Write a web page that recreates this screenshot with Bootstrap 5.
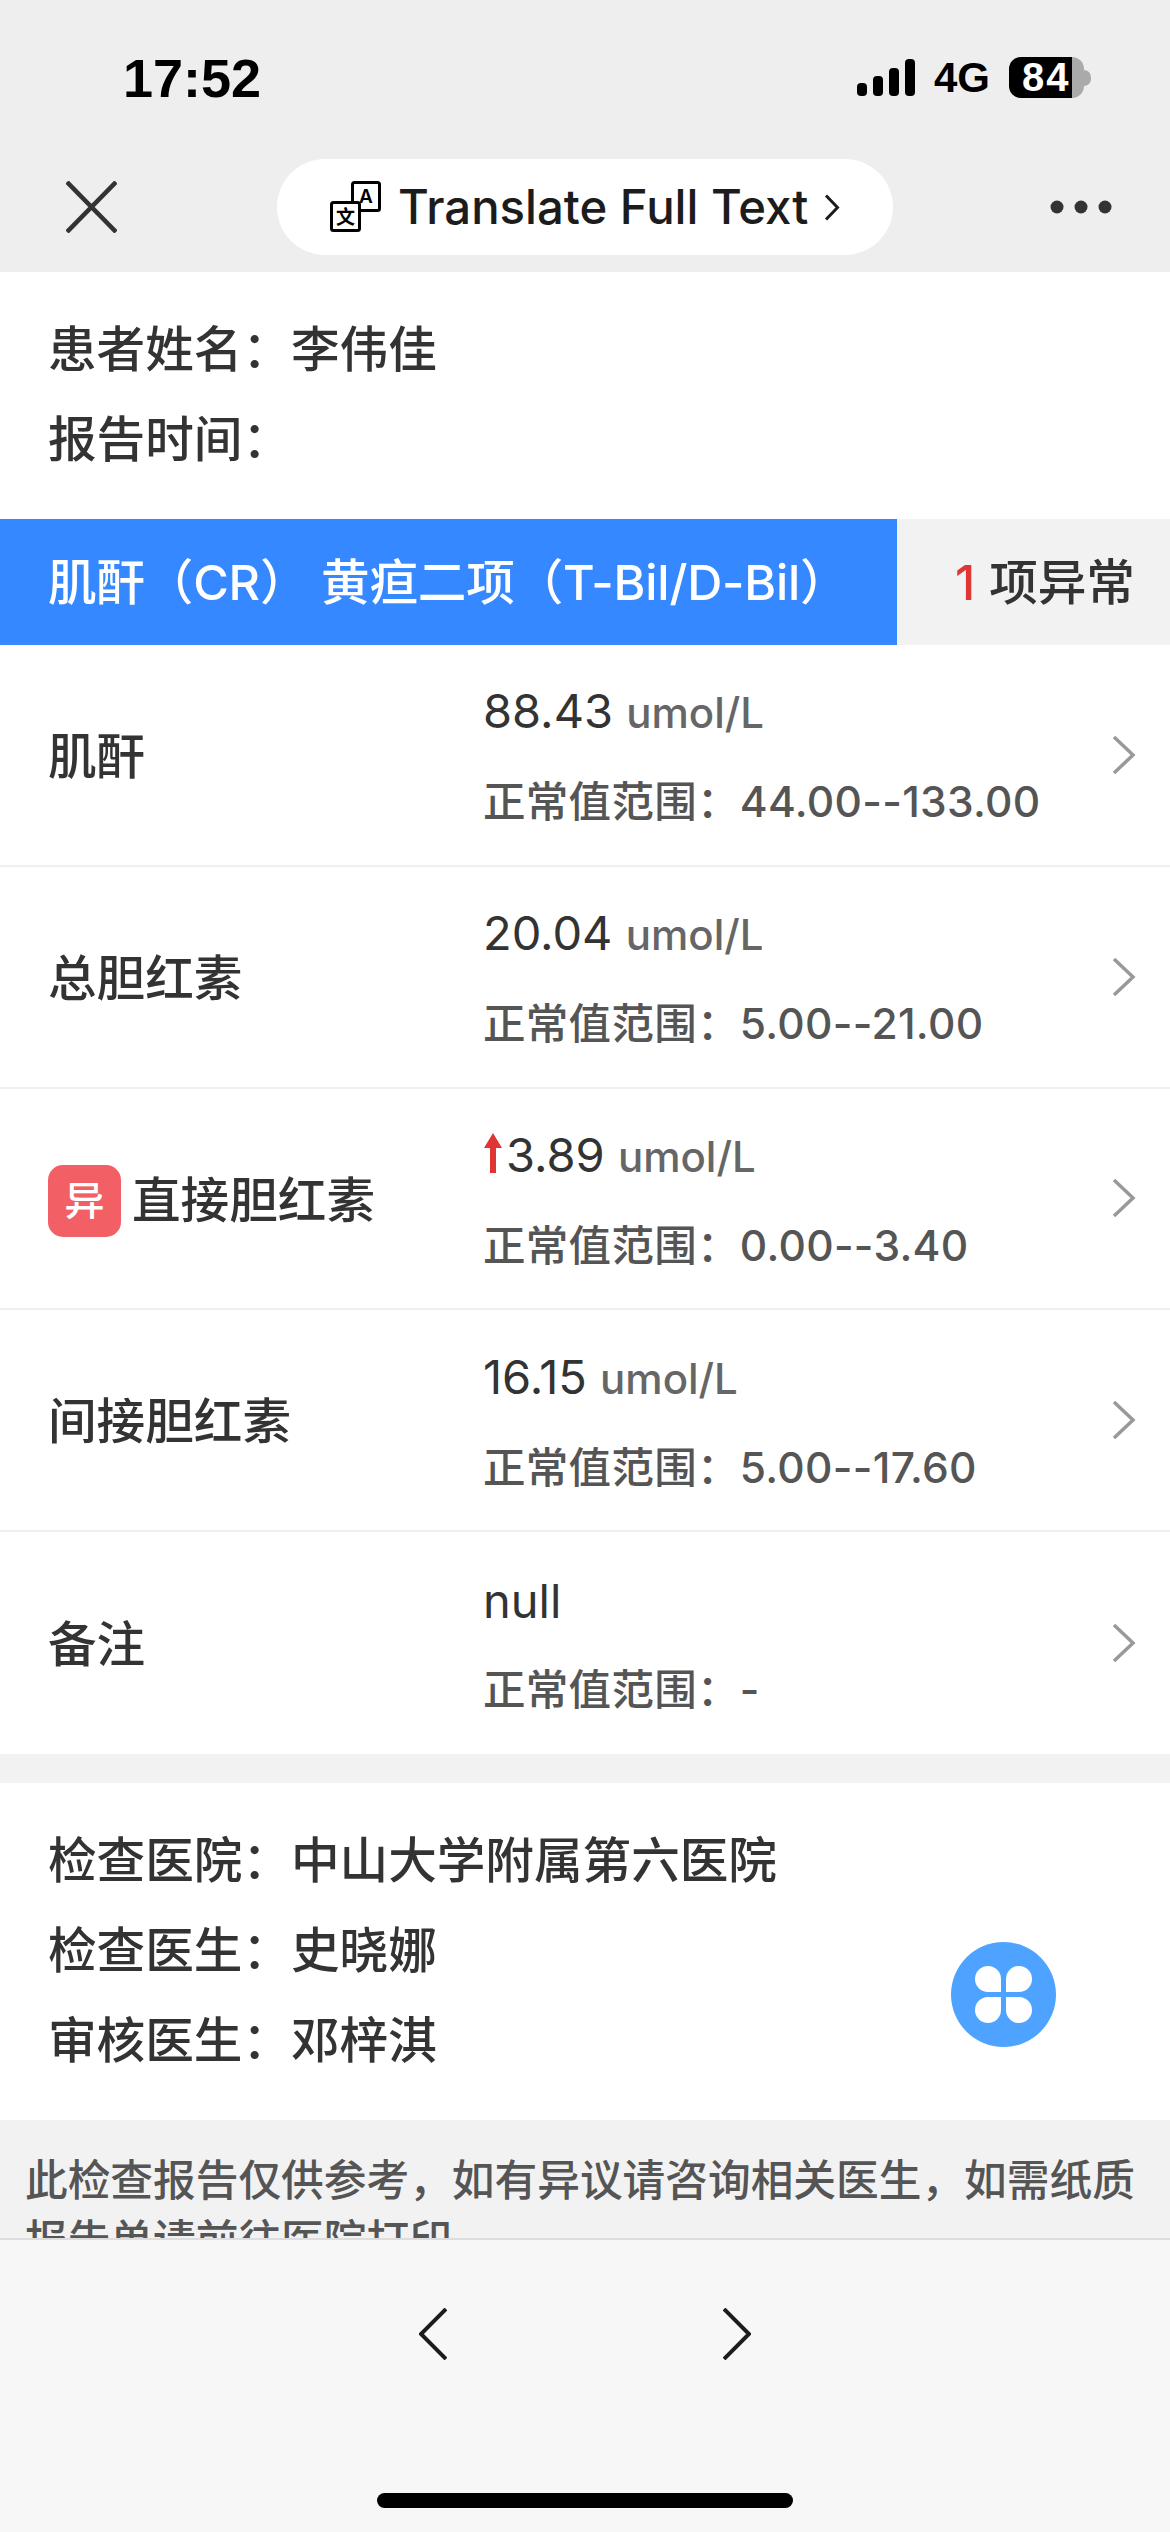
<!DOCTYPE html>
<html lang="zh-CN">
<head>
  <meta charset="UTF-8">
  <meta name="viewport" content="width=device-width, initial-scale=1">
  <title>检查报告</title>

  <link rel="stylesheet" href="https://cdn.jsdelivr.net/npm/bootstrap@5.3.0/dist/css/bootstrap.min.css">

  <style>
    body {
      font-family: Inter, "Noto Sans CJK SC", sans-serif;
      background-color: #fff;
      color: #333;
      width: 1170px;
    }
    .phone { height: 2532px; overflow: hidden; }

    /* top chrome */
    .top-chrome { background: #eee; height: 272px; flex: none; }
    .status-row { height: 159px; padding: 57px 79px 0 123px; }
    .clock { font: 700 54px/42px "Liberation Sans", sans-serif; color: #000; }
    .signal-bars { gap: 6px; height: 37px; }
    .signal-bars i { width: 10px; border-radius: 4px; background: #000; display: block; }
    .net-type { font: 700 42px/40px "Liberation Sans", sans-serif; color: #000; margin: 0 19px; }
    .battery {
      width: 75px; height: 41px; border-radius: 12px;
      background: linear-gradient(90deg, #000 63px, #aaa 63px);
      color: #fff; font: 700 40px/41px "Liberation Sans", sans-serif;
      padding-left: 13px; letter-spacing: 2px; white-space: nowrap;
    }
    .battery-nub { width: 7px; height: 16px; background: #aaa; border-radius: 0 8px 8px 0; }
    .nav-row { padding: 0 58px 0 66px; height: 96px; }
    .translate-pill {
      width: 616px; height: 96px; margin-left: 160px;
      background: #fff; color: #1c1c1c;
      font-size: 47.3px; font-weight: 500; padding-left: 53px;
    }

    /* report */
    .report-main { background: #f2f2f2; min-height: 0; }
    .info-block { background: #fff; padding: 33px 48px 34px; font-size: 48.6px; font-weight: 500; line-height: 90px; color: #333; }
    .tab-active { width: 897px; height: 126px; background: #3588ff; color: #fff; font-size: 48.6px; font-weight: 500; letter-spacing: -.2px; padding: 2px 0 0 48px; white-space: nowrap; }
    .tab-other { height: 126px; font-size: 48.6px; font-weight: 500; background: #f2f2f2; color: #333; padding: 2px 0 0 58px; }
    .tab-other b { color: #df3535; font-weight: 500; margin-right: 14px; }

    .lab-list {
      --bs-list-group-border-width: 2px;
      --bs-list-group-border-color: #f0f0f2;
      --bs-list-group-color: #333;
      --bs-list-group-border-radius: 0;
    }
    .lab-row { height: 221.8px; }
    .lab-name { width: 483px; padding: 5px 0 0 48px; font-size: 48.6px; font-weight: 500; flex: none; }
    .abn-tag {
      width: 73px; height: 72px; margin-right: 11px;
      border-radius: 15px; background: #f26065; color: #fff; font-size: 40px;
    }
    .lab-value { font-size: 47px; line-height: 89px; width: 630px; flex: none; padding-top: 3px; }
    .lab-value small { font-size: 42px; font-weight: 500; color: #666; }
    .lab-range { font-size: 42.5px; font-weight: 500; letter-spacing: .3px; color: #555; line-height: 89px; }
    .row-arrow { width: 24px; height: 38px; margin-left: -1px; }
    .up-arrow { width: 20px; height: 40px; margin-right: 3px; vertical-align: -1px; }

    .foot-gap { height: 29px; }
    .note-text { padding: 31px 25px 0; font-size: 42.7px; font-weight: 500; line-height: 60px; color: #555; background: #f2f2f2; }

    .float-btn { width: 105px; height: 105px; left: 951px; top: 1942px; }

    /* bottom bar */
    .bottom-bar { height: 294px; background: #f7f7f7; border-top: 2px solid #ddd; flex: none; }
    .bottom-arrows { padding: 68px 0 0 419px; gap: 276px; }
    .home-line { width: 416px; height: 15px; background: #000; border-radius: 8px; left: 377px; top: 2493px; }
  </style>
</head>
<body>
  <div class="phone d-flex flex-column position-relative">

    <!-- Status bar and nav -->
    <div class="top-chrome">
      <div class="status-row d-flex justify-content-between align-items-start">
        <div class="clock">17:52</div>
        <div class="d-flex align-items-center">
          <div class="signal-bars d-flex align-items-end">
            <i style="height:13px"></i><i style="height:20px"></i><i style="height:28px"></i><i style="height:37px"></i>
          </div>
          <div class="net-type">4G</div>
          <div class="battery">84</div>
          <div class="battery-nub"></div>
        </div>
      </div>
      <div class="nav-row d-flex align-items-center">
        <svg width="51" height="52" viewBox="0 0 51 52" fill="none" stroke="#333" stroke-width="4.5"><path d="M1 1 50 51M50 1 1 51"/></svg>
        <div class="translate-pill rounded-pill d-flex align-items-center">
          <svg class="me-3" width="52" height="52" viewBox="0 0 52 52" fill="none">
            <rect x="22.5" y="1.5" width="27" height="28" rx="2" fill="#fff" stroke="#000" stroke-width="3"/>
            <rect x="1.5" y="21.5" width="28" height="28" rx="2" fill="#fff" stroke="#000" stroke-width="3"/>
            <text x="36" y="22" text-anchor="middle" font-size="19" font-family="Inter" font-weight="600" fill="#000">A</text>
            <text x="15.5" y="43" text-anchor="middle" font-size="19" font-family="Noto Sans CJK SC" font-weight="700" fill="#000">文</text>
          </svg>
          <span>Translate Full Text</span>
          <svg class="ms-3" width="16" height="27" viewBox="0 0 16 27" fill="none" stroke="#1c1c1c" stroke-width="3"><path d="M2 1.5 13.5 13.5 2 25.5"/></svg>
        </div>
        <svg class="ms-auto" width="62" height="14" viewBox="0 0 62 14" fill="#333"><circle cx="7" cy="7" r="6.5"/><circle cx="31" cy="7" r="6.5"/><circle cx="55" cy="7" r="6.5"/></svg>
      </div>
    </div>

    <div class="report-main flex-grow-1 overflow-hidden">
      <!-- Patient -->
      <div class="info-block">
        <div>患者姓名：李伟佳</div>
        <div>报告时间：</div>
      </div>

      <!-- Tabs -->
      <div class="d-flex">
        <div class="tab-active d-flex align-items-center">肌酐（CR）&nbsp;黄疸二项（T-Bil/D-Bil）</div>
        <div class="tab-other flex-grow-1 d-flex align-items-center"><b>1</b>项异常</div>
      </div>

      <!-- Results -->
      <ul class="lab-list list-group list-group-flush">
        <li class="lab-row list-group-item d-flex align-items-center p-0">
          <div class="lab-name">肌酐</div>
          <div class="lab-value">
            <div>88.43 <small>umol/L</small></div>
            <div class="lab-range">正常值范围：44.00--133.00</div>
          </div>
          <svg class="row-arrow" viewBox="0 0 24 38" fill="none" stroke="#999" stroke-width="3.5"><path d="M2 1 21 19 2 37"/></svg>
        </li>
        <li class="lab-row list-group-item d-flex align-items-center p-0">
          <div class="lab-name">总胆红素</div>
          <div class="lab-value">
            <div>20.04 <small>umol/L</small></div>
            <div class="lab-range">正常值范围：5.00--21.00</div>
          </div>
          <svg class="row-arrow" viewBox="0 0 24 38" fill="none" stroke="#999" stroke-width="3.5"><path d="M2 1 21 19 2 37"/></svg>
        </li>
        <li class="lab-row list-group-item d-flex align-items-center p-0">
          <div class="lab-name d-flex align-items-center">
            <span class="abn-tag d-flex align-items-center justify-content-center">异</span>直接胆红素
          </div>
          <div class="lab-value">
            <div><svg class="up-arrow" viewBox="0 0 20 40" fill="#df3535"><path d="M10 0 19 15H13V40H7V15H1Z"/></svg>3.89 <small>umol/L</small></div>
            <div class="lab-range">正常值范围：0.00--3.40</div>
          </div>
          <svg class="row-arrow" viewBox="0 0 24 38" fill="none" stroke="#999" stroke-width="3.5"><path d="M2 1 21 19 2 37"/></svg>
        </li>
        <li class="lab-row list-group-item d-flex align-items-center p-0">
          <div class="lab-name">间接胆红素</div>
          <div class="lab-value">
            <div>16.15 <small>umol/L</small></div>
            <div class="lab-range">正常值范围：5.00--17.60</div>
          </div>
          <svg class="row-arrow" viewBox="0 0 24 38" fill="none" stroke="#999" stroke-width="3.5"><path d="M2 1 21 19 2 37"/></svg>
        </li>
        <li class="lab-row list-group-item d-flex align-items-center p-0">
          <div class="lab-name">备注</div>
          <div class="lab-value">
            <div>null</div>
            <div class="lab-range">正常值范围：-</div>
          </div>
          <svg class="row-arrow" viewBox="0 0 24 38" fill="none" stroke="#999" stroke-width="3.5"><path d="M2 1 21 19 2 37"/></svg>
        </li>
      </ul>

      <div class="foot-gap"></div>

      <!-- Hospital -->
      <div class="info-block">
        <div>检查医院：中山大学附属第六医院</div>
        <div>检查医生：史晓娜</div>
        <div>审核医生：邓梓淇</div>
      </div>

      <div class="note-text">此检查报告仅供参考，如有异议请咨询相关医生，如需纸质报告单请前往医院打印</div>
    </div>

    <!-- Bottom browser bar -->
    <div class="bottom-bar">
      <div class="bottom-arrows d-flex">
        <svg width="28" height="52" viewBox="0 0 28 52" fill="none" stroke="#1c1c1c" stroke-width="4"><path d="M27 1 2 26 27 51"/></svg>
        <svg width="28" height="52" viewBox="0 0 28 52" fill="none" stroke="#1c1c1c" stroke-width="4"><path d="M1 1 26 26 1 51"/></svg>
      </div>
    </div>
    <div class="home-line position-absolute"></div>

    <!-- Floating menu button -->
    <svg class="float-btn position-absolute" viewBox="0 0 105 105">
      <circle cx="52.5" cy="52.5" r="52.5" fill="#4da3ff"/>
      <g fill="#fff">
        <path d="M50 50H37A13 13 0 1 1 50 37Z"/>
        <path d="M55 50H68A13 13 0 1 0 55 37Z"/>
        <path d="M50 55H37A13 13 0 1 0 50 68Z"/>
        <path d="M55 55H68A13 13 0 1 1 55 68Z"/>
      </g>
    </svg>
  </div>

  <script src="https://cdn.jsdelivr.net/npm/bootstrap@5.3.0/dist/js/bootstrap.bundle.min.js"></script>
</body>
</html>
